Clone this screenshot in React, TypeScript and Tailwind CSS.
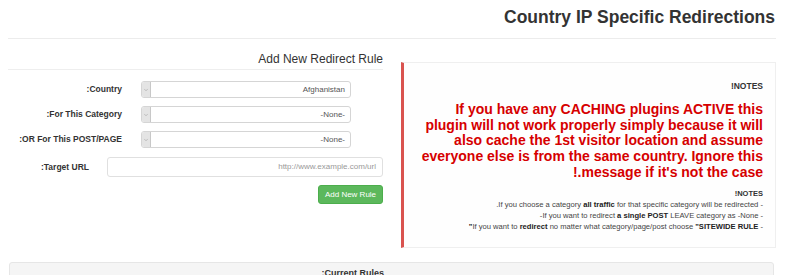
import { ChevronDown } from 'lucide-react';

const NOTES = [
  <>
    - If you choose a category <b className="text-[#222]">all traffic</b> for that specific category will be redirected.
  </>,
  <>
    - If you want to redirect <b className="text-[#222]">a single POST</b> LEAVE category as -None-
  </>,
  <>
    - If you want to <b className="text-[#222]">redirect</b> no matter what category/page/post choose <b className="text-[#222]">"SITEWIDE RULE"</b>
  </>,
];

function FakeSelect({ label, value, top }: { label: string; value: string; top: string }) {
  return (
    <div className={`flex items-center ${top}`}>
      <div dir="rtl" className="w-[114px] text-right text-[8.5px] font-bold text-[#333]">
        {label}
      </div>
      <div className="ml-[19px] flex h-[17px] w-[210px] overflow-hidden rounded-[3px] border border-[#d5d5d5] bg-white">
        <div className="flex w-[9px] items-center justify-center border-r border-[#c8c8c8] bg-[#e4e4e4]">
          <ChevronDown className="h-[6px] w-[6px] text-[#999]" strokeWidth={2} />
        </div>
        <div dir="rtl" className="flex flex-1 items-center pr-[5px] text-right text-[8px] text-[#555]">
          {value}
        </div>
      </div>
    </div>
  );
}

export default function App() {
  return (
    <div dir="rtl" className="h-[275px] w-[786px] overflow-hidden bg-white pl-[8px] pr-[10px] font-['Liberation_Sans',Arial,sans-serif] text-[#333]">
      <h1 className="pr-[1px] pt-[7px] text-right text-[17.5px] font-bold leading-[20px] text-[#333]">
        Country IP Specific Redirections
      </h1>
      <div className="mt-[11px] border-t border-[#ececec]" />

      <div className="flex gap-[18px]">
        {/* notes */}
        <div className="mt-[23px] h-[186px] w-[375px] border-y border-r border-l-[3px] border-[#efefef] border-l-[#d9534f] bg-[#fefefe]">
          <div className="pr-[12px] pt-[18px] text-right">
            <p className="text-[8.5px] font-bold leading-[11px] text-[#333]">NOTES!</p>
            <p className="mt-[10px] text-[14px] font-bold leading-[15.7px] text-[#d60000]">
              If you have any CACHING plugins ACTIVE this
              <br />
              plugin will not work properly simply because it will
              <br />
              also cache the 1st visitor location and assume
              <br />
              everyone else is from the same country. Ignore this
              <br />
              message if it's not the case.!
            </p>
            <p className="mt-[7px] text-[7.5px] font-bold leading-[11px] text-[#333]">NOTES!</p>
            <div className="text-[7.6px] leading-[11px] text-[#444]">
              {NOTES.map((n, i) => (
                <p key={i}>{n}</p>
              ))}
            </div>
          </div>
        </div>

        {/* form */}
        <div dir="ltr" className="w-[375px]">
          <div dir="rtl" className="mt-[13px] border-b border-[#eeeeee] pb-[3px] text-right text-[12px] leading-[14px] text-[#333]">
            Add New Redirect Rule
          </div>
          <FakeSelect label="Country:" value="Afghanistan" top="mt-[11px]" />
          <FakeSelect label="For This Category:" value="-None-" top="mt-[8px]" />
          <FakeSelect label="OR For This POST/PAGE:" value="-None-" top="mt-[8px]" />
          <div className="mt-[9px] flex items-center">
            <div dir="rtl" className="w-[81px] text-right text-[8.5px] font-bold text-[#333]">
              Target URL:
            </div>
            <div className="ml-[18px] flex h-[20px] w-[276px] items-center justify-end rounded-[3px] border border-[#e0e0e0] bg-white pr-[6px] text-[8px] text-[#999]">
              http://www.example.com/url
            </div>
          </div>
          <div className="mt-[8px] flex justify-end">
            <button className="h-[19px] w-[65px] rounded-[3px] border border-[#4cae4c] bg-[#5cb85c] text-[8px] text-white">
              Add New Rule
            </button>
          </div>
        </div>
      </div>

      <div dir="ltr" className="ml-[1px] mr-[2px] mt-[14px] h-[30px] rounded-[3px] border border-[#e6e6e6] bg-[#f5f5f5]">
        <div dir="rtl" className="w-[374px] pt-[4px] text-right text-[9px] font-semibold text-[#333]">
          Current Rules:
        </div>
      </div>
    </div>
  );
}
